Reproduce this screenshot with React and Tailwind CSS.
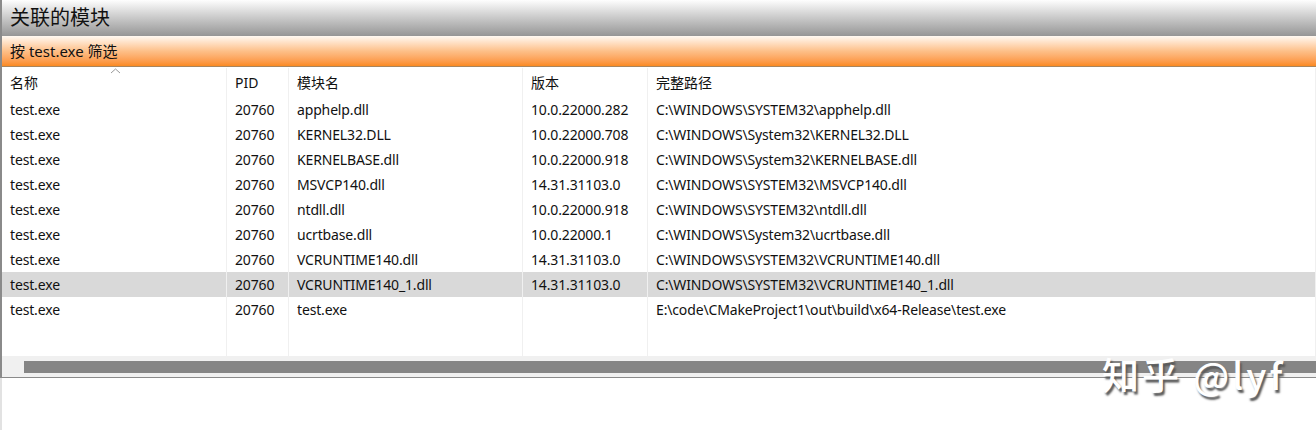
import React from 'react';

const ROWS = [
  ['test.exe', '20760', 'apphelp.dll', '10.0.22000.282', 'C:\\WINDOWS\\SYSTEM32\\apphelp.dll'],
  ['test.exe', '20760', 'KERNEL32.DLL', '10.0.22000.708', 'C:\\WINDOWS\\System32\\KERNEL32.DLL'],
  ['test.exe', '20760', 'KERNELBASE.dll', '10.0.22000.918', 'C:\\WINDOWS\\System32\\KERNELBASE.dll'],
  ['test.exe', '20760', 'MSVCP140.dll', '14.31.31103.0', 'C:\\WINDOWS\\SYSTEM32\\MSVCP140.dll'],
  ['test.exe', '20760', 'ntdll.dll', '10.0.22000.918', 'C:\\WINDOWS\\SYSTEM32\\ntdll.dll'],
  ['test.exe', '20760', 'ucrtbase.dll', '10.0.22000.1', 'C:\\WINDOWS\\System32\\ucrtbase.dll'],
  ['test.exe', '20760', 'VCRUNTIME140.dll', '14.31.31103.0', 'C:\\WINDOWS\\SYSTEM32\\VCRUNTIME140.dll'],
  ['test.exe', '20760', 'VCRUNTIME140_1.dll', '14.31.31103.0', 'C:\\WINDOWS\\SYSTEM32\\VCRUNTIME140_1.dll'],
  ['test.exe', '20760', 'test.exe', '', 'E:\\code\\CMakeProject1\\out\\build\\x64-Release\\test.exe'],
];

const SELECTED = 7;
const GRID = 'grid grid-cols-[225px_62px_234px_125px_1fr]';
const CELL = 'border-r border-[#f0f0f0] pl-2 whitespace-nowrap overflow-hidden';

const SortArrow = () => (
  <svg className="absolute left-[108px] top-[0px]" width="11" height="6" viewBox="0 0 11 6">
    <polyline points="1,5 5.5,1 10,5" fill="none" stroke="#9a9a9a" strokeWidth="1" />
  </svg>
);

const Row = ({ cells, selected }) => (
  <div className={`${GRID} h-[25px] items-center ${selected ? 'bg-[#d9d9d9]' : ''}`}>
    {cells.map((c, i) => (
      <div key={i} className={`${CELL} h-full flex items-center`}>{c}</div>
    ))}
  </div>
);

export default function App() {
  return (
    <div className="relative w-[1316px] h-[430px] bg-white text-[14px] text-[#111] font-['Noto_Sans','Noto_Sans_CJK_SC',sans-serif] overflow-hidden">
      <div className="flex flex-col h-[378px] border-l-2 border-b border-[#8a8a8a]">
        <div className="h-[36px] flex items-center pl-2 text-[20px] bg-gradient-to-b from-[#fefefe] to-[#969696]">
          关联的模块
        </div>
        <div className="h-[31px] flex items-center pl-2 text-[15px] bg-gradient-to-b from-[#fff9f2] via-[#fdc089] to-[#fb8a1f] border-b border-[#a8855f]">
          按 test.exe 筛选
        </div>
        <div className={`${GRID} h-[30px] relative pt-[1px]`}>
          <div className={`${CELL} flex items-center relative`}>
            名称
            <SortArrow />
          </div>
          <div className={`${CELL} flex items-center`}>PID</div>
          <div className={`${CELL} flex items-center`}>模块名</div>
          <div className={`${CELL} flex items-center`}>版本</div>
          <div className={`${CELL} flex items-center`}>完整路径</div>
        </div>
        <div className="tracking-[-0.15px]">
          {ROWS.map((r, i) => (
            <Row key={i} cells={r} selected={i === SELECTED} />
          ))}
        </div>
        <div className={`${GRID} flex-1`}>
          <div className={CELL} />
          <div className={CELL} />
          <div className={CELL} />
          <div className={CELL} />
          <div className={CELL} />
        </div>
        <div className="h-[21px] bg-[#f0f0f0] flex items-center pl-[22px]">
          <div className="h-[12px] flex-1 bg-[#858585]" />
        </div>
      </div>
      <div className="h-[52px] border-l-2 border-[#e2e2e2]" />
      <div className="absolute left-[1102px] top-[347px] text-[37px] font-medium text-white tracking-[3px] [text-shadow:2px_3px_2px_#5a5a5a] font-['Noto_Sans_CJK_SC','Noto_Sans',sans-serif]">
        知乎 @lyf
      </div>
    </div>
  );
}
